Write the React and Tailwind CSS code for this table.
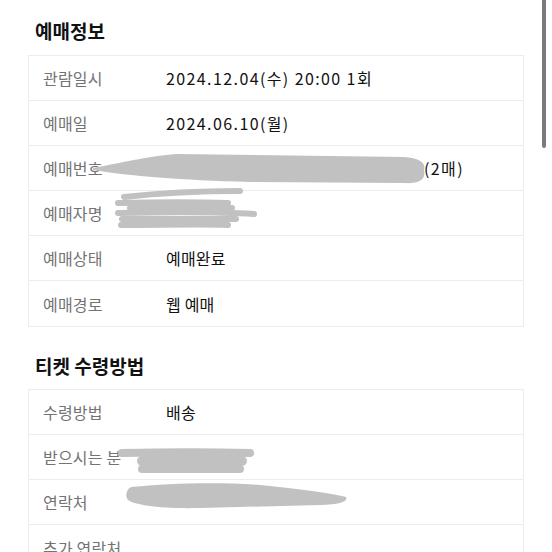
import React from "react";

const FONT = '"Noto Sans CJK KR", "Noto Sans", sans-serif';

const reservation = [
  { label: "관람일시", value: "2024.12.04(수) 20:00 1회", wide: true },
  { label: "예매일", value: "2024.06.10(월)", wide: true },
  { label: "예매번호", value: <span className="ml-[258px]">(2매)</span>, wide: true },
  { label: "예매자명", value: "" },
  { label: "예매상태", value: "예매완료" },
  { label: "예매경로", value: "웹 예매" },
];

const delivery = [
  { label: "수령방법", value: "배송" },
  { label: "받으시는 분", value: "" },
  { label: "연락처", value: "" },
  { label: "추가 연락처", value: "" },
];

function InfoTable({ rows }) {
  return (
    <div className="mx-[28px] border border-[#ececec]">
      {rows.map((r, i) => (
        <div
          key={i}
          className={`flex items-center h-[45px] ${i < rows.length - 1 ? "border-b border-[#ececec]" : ""}`}
        >
          <div className="w-[137px] shrink-0 pl-[14px] text-[16px] tracking-[0.2px] text-[#737373]">{r.label}</div>
          <div className={`text-[16px] text-[#111] ${r.wide ? "tracking-[1.4px]" : "tracking-[0.2px]"}`}>{r.value}</div>
        </div>
      ))}
    </div>
  );
}

// scribbled-out personal info, drawn in page coordinates
function Redactions() {
  return (
    <svg className="absolute left-0 top-0 pointer-events-none" width="552" height="600" viewBox="0 0 552 600">
      <g fill="#c1c1c1" stroke="none">
        <path d="M93,168 C130,161 150,156 176,154 L404,157 C420,158 426,163 424,170 C426,179 420,184 404,183 L250,182 C180,180 130,176 93,170 Z" />
        <path d="M131,487 C170,483 220,482 260,485 C300,489 330,493 346,497 C348,502 340,504 320,505 L200,508 C160,509 135,505 128,500 C125,496 126,490 131,487 Z" />
      </g>
      <g stroke="#c1c1c1" strokeLinecap="round" fill="none">
        <path d="M124,197 C160,193 200,191 240,191" strokeWidth="6" />
        <path d="M118,203 C160,202 200,202 228,203" strokeWidth="6" />
        <path d="M130,208 L232,208" strokeWidth="6" />
        <path d="M118,213 C170,212 220,212 254,214" strokeWidth="6" />
        <path d="M122,219 L236,219" strokeWidth="6" />
        <path d="M121,225 C160,225 200,224 228,225" strokeWidth="6" />
        <path d="M122,453 C170,452 210,452 250,453" strokeWidth="8" />
        <path d="M142,461 L242,461" strokeWidth="10" />
        <path d="M142,469 L240,469" strokeWidth="8" />
      </g>
    </svg>
  );
}

export default function App() {
  return (
    <div className="relative w-[552px] min-h-[552px] bg-white overflow-hidden" style={{ fontFamily: FONT }}>
      <div className="pt-[18px]">
        <h2 className="pl-[35px] text-[19px] font-bold text-[#111] leading-[26px] mb-[11px]">예매정보</h2>
        <InfoTable rows={reservation} />
        <h2 className="pl-[35px] text-[19px] font-bold text-[#111] leading-[26px] mt-[26px] mb-[10px]">티켓 수령방법</h2>
        <InfoTable rows={delivery} />
      </div>
      <Redactions />
      <div className="absolute right-[6px] top-0 w-[4px] h-[148px] bg-[#7a7a7a] rounded-b" />
    </div>
  );
}
